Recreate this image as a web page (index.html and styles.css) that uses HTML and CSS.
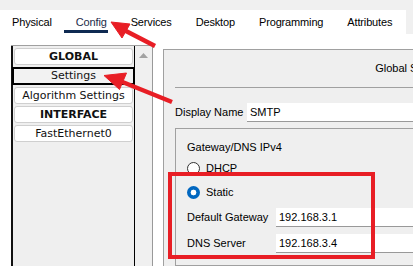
FILE: index.html
```html
<!DOCTYPE html>
<html>
<head>
<meta charset="utf-8">
<link rel="stylesheet" href="styles.css">
</head>
<body>
<div class="page">
  <header class="header">
    <nav class="tabs">
      <span class="tab">Physical</span>
      <span class="tab active">Config</span>
      <span class="tab">Services</span>
      <span class="tab">Desktop</span>
      <span class="tab">Programming</span>
      <span class="tab">Attributes</span>
    </nav>
  </header>
  <main class="main">
    <aside class="sidebar">
      <div class="list">
        <div class="item bold">GLOBAL</div>
        <div class="item selected">Settings</div>
        <div class="item">Algorithm Settings</div>
        <div class="item bold">INTERFACE</div>
        <div class="item">FastEthernet0</div>
      </div>
      <div class="scrollbar">
        <svg class="scroll-up" width="9" height="5" viewBox="0 0 9 5"><polygon points="0,5 4.5,0 9,5" fill="#a2a2a2"/></svg>
      </div>
    </aside>
    <section class="panel">
      <div class="panel-title">Global Settings</div>
      <div class="field-row name-row">
        <label class="label name-label">Display Name</label>
        <div class="input">SMTP</div>
      </div>
      <div class="group">
        <div class="group-title">Gateway/DNS IPv4</div>
        <div class="radio-row dhcp"><span class="radio"></span><span>DHCP</span></div>
        <div class="radio-row static"><span class="radio checked"></span><span>Static</span></div>
        <div class="field-row gw-row">
          <label class="label gw-label">Default Gateway</label>
          <div class="input">192.168.3.1</div>
        </div>
        <div class="field-row gw-row">
          <label class="label gw-label">DNS Server</label>
          <div class="input">192.168.3.4</div>
        </div>
      </div>
    </section>
  </main>
  <div class="highlight"></div>
  <svg class="arrows" width="413" height="266" viewBox="0 0 413 266">
    <g fill="#e81e25" stroke="#e81e25">
      <line x1="124" y1="30" x2="155" y2="46" stroke-width="4.5"/>
      <polygon points="111,22 130,24 122,38" stroke-width="1" stroke-linejoin="round"/>
      <line x1="120" y1="81" x2="172" y2="102" stroke-width="4.5"/>
      <polygon points="104,75.5 126.5,73 119.5,89.5" stroke-width="1" stroke-linejoin="round"/>
    </g>
  </svg>
</div>
</body>
</html>
```
FILE: styles.css
```css
* { box-sizing: border-box; }
html, body { margin: 0; padding: 0; }
body {
  background: #ffffff;
  font-family: "Liberation Sans", Arial, sans-serif;
  font-size: 11px;
  color: #000;
}
.page {
  position: relative;
  width: 413px;
  height: 266px;
  overflow: hidden;
}
.header {
  background: #f0f0f0;
  height: 34px;
  padding-top: 10px;
}
.tabs {
  display: flex;
  width: 406px;
  height: 24px;
  background: #fff;
}
.tab {
  position: relative;
  padding: 6px 12px 0 12px;
  line-height: 13px;
  white-space: nowrap;
  letter-spacing: -0.15px;
}
.tab.active { color: #1b2a48; }
.tab.active::after {
  content: "";
  position: absolute;
  left: 0;
  top: 20px;
  width: 44px;
  height: 3px;
  background: #0f2a52;
}
.main {
  display: flex;
  align-items: flex-start;
}
.sidebar {
  flex-shrink: 0;
  display: flex;
  margin: 11px 0 0 11px;
  height: 240px;
  border-top: 1px solid #a0a0a0;
}
.list {
  width: 124px;
  height: 100%;
  background: #efefef;
  border-left: 2px solid #111;
  border-right: 1px solid #000;
  padding-top: 2px;
  display: flex;
  flex-direction: column;
  gap: 2px;
  font-family: "DejaVu Sans", Verdana, sans-serif;
  font-size: 11px;
}
.item {
  height: 17px;
  margin: 0 1px;
  background: #fff;
  border: 1px solid #cfcfcf;
  border-radius: 3px;
  text-align: center;
  line-height: 15px;
  color: #111;
}
.item.bold { font-weight: bold; }
.item.selected {
  margin: 0 -1px;
  background: #f2f2f2;
  border: 2px solid #000;
  border-radius: 0;
  line-height: 13px;
  height: 18px;
}
.scrollbar {
  width: 18px;
  height: 100%;
  background: #f0f0f0;
  border-right: 1px solid #999;
  display: flex;
  justify-content: center;
  padding-top: 7px;
}
.scroll-up { display: block; }
.panel {
  flex-shrink: 0;
  margin: 15px 0 0 10px;
  width: 487px;
  height: 240px;
  background: #efefef;
  border-top: 1px solid #a0a0a0;
  border-left: 1px solid #a0a0a0;
  padding: 0 0 0 11px;
}
.panel-title {
  height: 38px;
  line-height: 37px;
  text-align: center;
  white-space: nowrap;
  border-bottom: 1px solid #a0a0a0;
}
.field-row {
  display: flex;
  align-items: stretch;
  height: 19px;
}
.name-row { margin-top: 15px; }
.label {
  line-height: 19px;
  white-space: nowrap;
}
.name-label { width: 72px; }
.gw-label { width: 89px; }
.input {
  flex: 1;
  background: #fff;
  border-bottom: 1px solid #999;
  padding-left: 3px;
  line-height: 18px;
  white-space: nowrap;
}
.group {
  margin-top: 6px;
  height: 138px;
  border: 1px solid #a0a0a0;
  padding: 9px 0 0 11px;
}
.group-title { line-height: 18px; height: 18px; }
.radio-row {
  display: flex;
  align-items: center;
  gap: 6px;
  height: 18px;
}
.dhcp { margin-top: 3px; }
.static { margin-top: 6px; }
.radio {
  width: 13px;
  height: 13px;
  border-radius: 50%;
  border: 1px solid #333;
  background: #fff;
}
.radio.checked {
  border: none;
  background: radial-gradient(circle, #fff 0 2.6px, #0067c0 3.2px);
}
.gw-row { margin-top: 7px; }
.highlight {
  position: absolute;
  left: 168px;
  top: 172px;
  width: 207px;
  height: 87px;
  border: 4.5px solid #e81e25;
}
.arrows {
  position: absolute;
  left: 0;
  top: 0;
  pointer-events: none;
}
```
